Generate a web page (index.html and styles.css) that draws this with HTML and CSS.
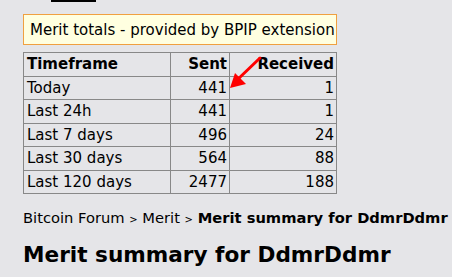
FILE: index.html
```html
<!DOCTYPE html>
<html lang="en">
<head>
    <meta charset="UTF-8">
    <title>Merit summary for DdmrDdmr</title>
    <link rel="stylesheet" href="styles.css">
</head>
<body>

    <!-- bottom edge of the menu button above -->
    <div class="top-edge"></div>

    <div class="page">
        <!-- BPIP totals box -->
        <div class="bpip-note">Merit totals - provided by BPIP extension</div>

        <div class="totals-wrap">
            <table class="totals">
                <tr>
                    <th class="col-frame">Timeframe</th>
                    <th class="col-sent">Sent</th>
                    <th class="col-recv">Received</th>
                </tr>
                <tr><td>Today</td><td class="num">441</td><td class="num">1</td></tr>
                <tr><td>Last 24h</td><td class="num">441</td><td class="num">1</td></tr>
                <tr><td>Last 7 days</td><td class="num">496</td><td class="num">24</td></tr>
                <tr><td>Last 30 days</td><td class="num">564</td><td class="num">88</td></tr>
                <tr><td>Last 120 days</td><td class="num">2477</td><td class="num">188</td></tr>
            </table>

            <!-- red pointer arrow -->
            <svg class="pointer" width="40" height="40" viewBox="0 0 40 40">
                <line x1="34" y1="4" x2="10" y2="27" stroke="#ff0000" stroke-width="3" stroke-linecap="round"/>
                <polygon points="4,34 9,19 20,30" fill="#ff0000"/>
            </svg>
        </div>

        <div class="nav">
            <a href="#">Bitcoin Forum</a> <span class="sep">&gt;</span>
            <a href="#">Merit</a> <span class="sep">&gt;</span>
            <b>Merit summary for DdmrDdmr</b>
        </div>

        <h1>Merit summary for DdmrDdmr</h1>
    </div>

</body>
</html>
```

FILE: styles.css
```css
body {
    margin: 0;
    padding: 0;
    background: #e5e5e8;
    font-family: Verdana, "DejaVu Sans", sans-serif;
    font-size: 15px;
    color: #000;
}

.top-edge {
    width: 45px;
    height: 2px;
    margin-left: 51px;
    background: #000;
}

.page {
    padding: 12px 0 0 23px;
}

/* yellow info box */
.bpip-note {
    width: 306px;
    height: 29px;
    line-height: 31px;
    padding-left: 6px;
    background: #ffffe0;
    border: 1px solid #f0a040;
    box-sizing: content-box;
    white-space: nowrap;
    overflow: hidden;
}

.totals-wrap {
    position: relative;
    width: 314px;
    margin-top: 7px;
}

.totals {
    border-collapse: collapse;
    width: 314px;
}

.totals th, .totals td {
    border: 1px solid #888;
    height: 22.5px;
    padding: 0 2px 0 3px;
    white-space: nowrap;
}

.totals th {
    text-align: right;
    font-weight: bold;
}

.totals th.col-frame {
    text-align: left;
    width: 141px;
}

.totals th.col-sent {
    width: 53px;
}

.totals td.num {
    text-align: right;
}

.pointer {
    position: absolute;
    left: 203px;
    top: 2px;
}

/* breadcrumb */
.nav {
    margin-top: 15px;
    font-size: 14.7px;
    white-space: nowrap;
}

.nav a {
    color: #000;
    text-decoration: none;
}

.nav .sep {
    font-size: 10px;
}

h1 {
    margin: 16px 0 0;
    font-size: 21.6px;
    font-weight: bold;
}
```
